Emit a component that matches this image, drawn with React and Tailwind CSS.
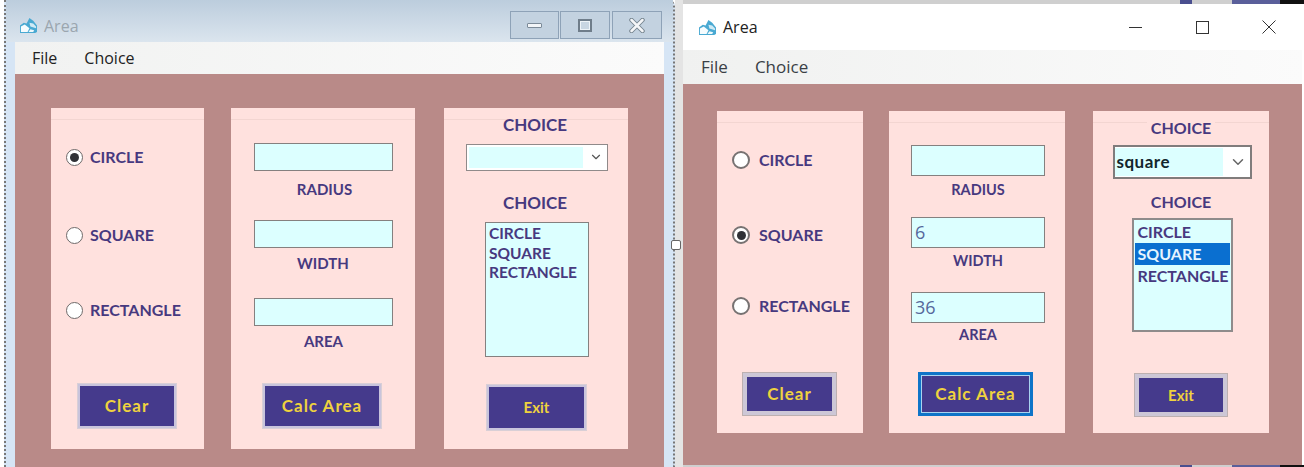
import React from 'react';
import { ChevronDown } from 'lucide-react';

const labelFont = { fontFamily: '"Lato", "Open Sans", sans-serif' };

// App icon from the title bar
function AppIcon({ className }) {
  return (
    <svg viewBox="0 0 20 18" className={className}>
      <path d="M1 17 V9 L5 6 L8 7 L11 1 L15 4 L19 9 V16 L17 17 Z" fill="#49a9d2" />
      <path d="M2 16 V10 L6 8 L11 12 L9 16 Z" fill="#f6fcfe" />
      <path d="M11 6 L15 7 L18 10 V12 L12 10 Z" fill="#cfeaf5" />
      <path d="M10 16 L12 13 L16 14 L15 16 Z" fill="#eef9fc" />
    </svg>
  );
}

function Radio({ label, checked, className, size }) {
  return (
    <div className={`flex items-center h-5 font-bold text-[16px] text-[#47397f] ${className}`} style={labelFont}>
      <span className={`rounded-full bg-white flex items-center justify-center shrink-0 ${size}`}>
        {checked && <span className="block w-[9px] h-[9px] rounded-full bg-[#2f3136]" />}
      </span>
      {label}
    </div>
  );
}

function Label({ children, className }) {
  return (
    <div className={`h-5 leading-5 font-bold text-[#47397f] text-center relative ${className}`} style={labelFont}>
      {children}
    </div>
  );
}

function Field({ value, className }) {
  return (
    <div className={`bg-[#dcffff] border border-[#85807f] px-[3px] text-[18px] leading-[28px] text-[#56689b] ${className}`} style={{ fontFamily: '"Open Sans", sans-serif' }}>
      {value}
    </div>
  );
}

function Btn({ children, className }) {
  return (
    <div className={`flex items-center justify-center bg-[#453a8c] font-bold text-[#efd23e] box-border ${className}`} style={labelFont}>
      {children}
    </div>
  );
}

function Panel({ className, children }) {
  return (
    <div className={`relative flex flex-col items-center bg-[#ffe1de] ${className}`}>
      <div className="absolute left-0 right-0 top-[11px] h-px bg-[#f3d5d1]" />
      {children}
    </div>
  );
}

function ListRows({ selected, rowClass }) {
  return ['CIRCLE', 'SQUARE', 'RECTANGLE'].map(item => (
    <div
      key={item}
      className={`px-[3px] font-bold ${rowClass} ${selected === item ? 'bg-[#0a6fd0] text-[#e6f4ff]' : 'text-[#47397f]'}`}
      style={labelFont}
    >
      {item}
    </div>
  ));
}

function LeftWindow() {
  return (
    <div className="w-[675px] shrink-0 pl-[4px] bg-white">
      <div className="h-full border-x-2 border-dotted border-[#777] rounded-tr-[6px] bg-[#d6e5f5] px-[9px] flex flex-col">
        <div className="h-[42px] shrink-0 -mx-[9px] px-[13px] bg-gradient-to-b from-[#bccddd] to-[#dbe5ee] flex items-start">
          <AppIcon className="w-[19px] h-[17px] mt-[17px]" />
          <span className="ml-[6px] mt-[15px] text-[16px] leading-[22px] text-[#9ba6af]" style={{ fontFamily: '"Open Sans", sans-serif' }}>Area</span>
          <div className="ml-auto -mr-[2px] mt-[11px] flex">
            <div className="w-[49px] h-[28px] border border-[#8ea2b7] bg-[#c3d2e0] flex items-center justify-center">
              <span className="block w-[15px] h-[5px] rounded-[1px] bg-[#f2f5f8] border border-[#7b8a98]" />
            </div>
            <div className="ml-[1px] w-[50px] h-[28px] border border-[#8ea2b7] bg-[#c3d2e0] flex items-center justify-center">
              <span className="block w-[14px] h-[13px] border-2 border-[#6f7d8a] bg-[#c9d6e2] shadow-[inset_0_0_0_1px_#eef3f7]" />
            </div>
            <div className="ml-[2px] w-[50px] h-[28px] border border-[#8ea2b7] bg-[#c3d2e0] flex items-center justify-center">
              <svg width="16" height="15" viewBox="0 0 16 15" fill="none" strokeLinecap="round">
                <path d="M2.5 2 L13.5 13 M13.5 2 L2.5 13" stroke="#76858f" strokeWidth="4.5" />
                <path d="M2.5 2 L13.5 13 M13.5 2 L2.5 13" stroke="#f4f6f8" strokeWidth="2.5" />
              </svg>
            </div>
          </div>
        </div>
        <div className="h-[32px] shrink-0 pl-[17px] flex items-center text-[16px] text-[#222] bg-gradient-to-r from-[#f1f2f1] to-[#fbfbfb]" style={{ fontFamily: '"Open Sans", sans-serif' }}>
          <span>File</span>
          <span className="ml-[27px]">Choice</span>
        </div>
        <div className="flex-1 bg-[#b98a88] pl-[36px] pt-[34px] flex">
          <Panel className="w-[153px] h-[341px] !items-start pl-[15px]">
            <Radio label="CIRCLE" checked className="mt-[39px] gap-[7px]" size="w-[17px] h-[17px] border border-[#6f6a6a]" />
            <Radio label="SQUARE" className="mt-[58px] gap-[7px]" size="w-[17px] h-[17px] border border-[#6f6a6a]" />
            <Radio label="RECTANGLE" className="mt-[55px] gap-[7px]" size="w-[17px] h-[17px] border border-[#6f6a6a]" />
            <Btn className="mt-[64px] ml-[12px] w-[98px] h-[44px] text-[17px] tracking-[1px] border-2 border-[#c9c4dc] outline outline-1 outline-[#d9cfd6]">Clear</Btn>
          </Panel>
          <Panel className="ml-[27px] w-[184px] h-[341px]">
            <Field className="mt-[35px] w-[139px] h-[28px]" />
            <Label className="mt-[8px] ml-[3px] text-[15px]">RADIUS</Label>
            <Field className="mt-[21px] w-[139px] h-[28px]" />
            <Label className="mt-[5px] text-[15px]">WIDTH</Label>
            <Field className="mt-[25px] w-[139px] h-[28px]" />
            <Label className="mt-[5px] ml-[1px] text-[15px]">AREA</Label>
            <Btn className="mt-[33px] -ml-[2px] w-[118px] h-[44px] text-[17px] tracking-[1px] border-2 border-[#c9c4dc] outline outline-1 outline-[#d9cfd6]">Calc Area</Btn>
          </Panel>
          <Panel className="ml-[29px] w-[184px] h-[341px]">
            <Label className="mt-[7px] -ml-[2px] text-[17px]">CHOICE</Label>
            <div className="mt-[9px] ml-[2px] w-[142px] h-[27px] border border-[#908a8a] bg-white flex">
              <div className="w-[114px] my-[2px] ml-[2px] bg-[#dcffff]" />
              <ChevronDown size={14} className="ml-[6px] mt-[5px] text-[#555]" />
            </div>
            <Label className="mt-[22px] -ml-[2px] text-[17px]">CHOICE</Label>
            <div className="mt-[9px] ml-[2px] w-[104px] h-[135px] border border-[#85807f] bg-[#dcffff] py-[1px]">
              <ListRows rowClass="h-[19.5px] leading-[19.5px] text-[15.5px]" />
            </div>
            <Btn className="mt-[28px] ml-[1px] w-[99px] h-[45px] text-[15px] border-2 border-[#c9c4dc] outline outline-1 outline-[#d9cfd6]">Exit</Btn>
          </Panel>
        </div>
      </div>
    </div>
  );
}

function RightWindow() {
  return (
    <div className="flex-1 flex flex-col bg-white">
      <div className="h-[4px] shrink-0 flex bg-[#cfcfcf]">
        <span className="ml-[497px] w-[12px] bg-[#4a4f8f]" />
        <span className="ml-[40px] w-[48px] bg-[#5a5f9a]" />
        <span className="flex-1 bg-[#111]" />
      </div>
      <div className="flex-1 flex flex-col w-[619px] min-h-0">
        <div className="h-[46px] shrink-0 bg-white flex items-center">
          <AppIcon className="w-[19px] h-[17px] ml-[15px]" />
          <span className="ml-[6px] text-[16px] text-[#222]" style={{ fontFamily: '"Open Sans", sans-serif' }}>Area</span>
          <svg width="13" height="1" className="ml-auto"><rect width="13" height="1" fill="#333" /></svg>
          <svg width="13" height="13" className="ml-[54px]" fill="none"><rect x="0.5" y="0.5" width="12" height="12" stroke="#333" /></svg>
          <svg width="14" height="14" className="ml-[53px] mr-[26px]" fill="none"><path d="M0.5 0.5 L13.5 13.5 M13.5 0.5 L0.5 13.5" stroke="#333" /></svg>
        </div>
        <div className="h-[34px] shrink-0 pl-[18px] flex items-center text-[17px] font-medium text-[#3a3f46] bg-gradient-to-r from-[#f0f1f0] to-[#fbfbfb]" style={{ fontFamily: '"Open Sans", sans-serif' }}>
          <span>File</span>
          <span className="ml-[27px]">Choice</span>
        </div>
        <div className="flex-1 bg-[#b98a88] pl-[34px] pt-[27px] flex">
          <Panel className="w-[146px] h-[322px] !items-start pl-[15px]">
            <Radio label="CIRCLE" className="mt-[39px] gap-[9px]" size="w-[18px] h-[18px] border-2 border-[#777272]" />
            <Radio label="SQUARE" checked className="mt-[55px] gap-[9px]" size="w-[18px] h-[18px] border-2 border-[#777272]" />
            <Radio label="RECTANGLE" className="mt-[51px] gap-[9px]" size="w-[18px] h-[18px] border-2 border-[#777272]" />
            <Btn className="mt-[57px] ml-[11px] w-[93px] h-[42px] text-[17px] tracking-[1px] border-4 border-[#cdc7d6] outline outline-1 outline-[#bdb0b0]">Clear</Btn>
          </Panel>
          <Panel className="ml-[26px] w-[176px] h-[322px]">
            <Field className="mt-[34px] ml-[2px] w-[134px] h-[31px]" />
            <Label className="mt-[4px] ml-[2px] text-[14.5px]">RADIUS</Label>
            <Field value="6" className="mt-[17px] ml-[2px] w-[134px] h-[31px]" />
            <Label className="mt-[3px] ml-[2px] text-[14.5px]">WIDTH</Label>
            <Field value="36" className="mt-[21px] ml-[2px] w-[134px] h-[31px]" />
            <Label className="mt-[2px] ml-[2px] text-[14.5px]">AREA</Label>
            <Btn className="mt-[27px] -ml-[3px] w-[115px] h-[44px] text-[17px] tracking-[1px] border-[3px] border-[#0f74c8] shadow-[inset_0_0_0_1px_#a9d3f0]">Calc Area</Btn>
          </Panel>
          <Panel className="ml-[28px] w-[176px] h-[322px]">
            <Label className="mt-[7px] bg-[#ffe1de] px-1 text-[16px]">CHOICE</Label>
            <div className="mt-[7px] ml-[2px] w-[139px] h-[34px] border-2 border-[#807c7c] bg-white flex items-center">
              <div className="w-[108px] h-[28px] pl-[2px] leading-[28px] bg-[#dcffff] font-bold text-[17px] tracking-[0.5px] text-[#12262c]" style={labelFont}>square</div>
              <ChevronDown size={18} className="ml-[6px] text-[#666]" />
            </div>
            <Label className="mt-[13px] text-[16px]">CHOICE</Label>
            <div className="mt-[6px] ml-[2px] w-[101px] h-[114px] border-2 border-[#8f8b8b] bg-[#dcffff] pt-[1px] px-[1px]">
              <ListRows selected="SQUARE" rowClass="h-[22px] leading-[22px] text-[16px]" />
            </div>
            <Btn className="mt-[42px] w-[92px] h-[42px] text-[15px] border-4 border-[#cdc7d6] outline outline-1 outline-[#bdb0b0]">Exit</Btn>
          </Panel>
        </div>
      </div>
      <div className="h-[2px] shrink-0 flex bg-[#cfcfcf]">
        <span className="ml-[497px] w-[12px] bg-[#4a4f8f]" />
        <span className="ml-[40px] w-[48px] bg-[#5a5f9a]" />
        <span className="flex-1 bg-[#111]" />
      </div>
    </div>
  );
}

export default function App() {
  return (
    <div className="relative w-[1304px] h-[467px] overflow-hidden flex bg-[#e4e4e4]">
      <LeftWindow />
      <div className="w-[8px] shrink-0 bg-[#e4e4e4]" />
      <RightWindow />
      {/* window resize handle */}
      <div className="absolute left-[671px] top-[240px] w-[10px] h-[10px] rounded-[2px] border border-[#666] bg-white" />
    </div>
  );
}
